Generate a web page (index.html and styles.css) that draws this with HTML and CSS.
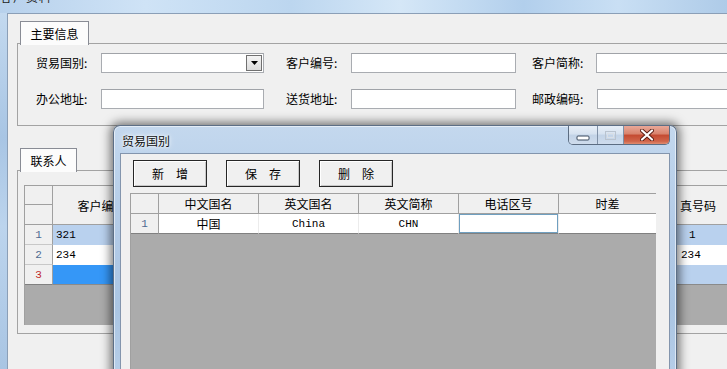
FILE: index.html
```html
<!DOCTYPE html>
<html lang="zh-CN">
<head>
<meta charset="utf-8">
<title>客户资料</title>
<link rel="stylesheet" href="styles.css">
</head>
<body>
<div class="screen">
  <div class="bg-title"><span>客户资料</span></div>
  <div class="bg-main">
    <div class="bg-frame"></div>
    <div class="bg-client">
      <div class="tabs"><div class="tab tab-main">主要信息</div></div>
      <div class="panel panel-info">
        <div class="form-row">
          <span class="lbl lbl-a">贸易国别:</span>
          <div class="input in-a combo"><span class="drop"><svg width="7" height="4" viewBox="0 0 7 4"><path d="M0 0h7L3.5 4z" fill="#000"/></svg></span></div>
          <span class="lbl lbl-b">客户编号:</span>
          <div class="input in-b"></div>
          <span class="lbl lbl-c">客户简称:</span>
          <div class="input in-c"></div>
        </div>
        <div class="form-row">
          <span class="lbl lbl-a">办公地址:</span>
          <div class="input in-a"></div>
          <span class="lbl lbl-b">送货地址:</span>
          <div class="input in-b"></div>
          <span class="lbl lbl-c lbl-c2">邮政编码:</span>
          <div class="input in-c"></div>
        </div>
      </div>
      <div class="tabs tabs-2"><div class="tab tab-contact">联系人</div></div>
      <div class="panel panel-contact">
        <div class="cgrid">
          <div class="crow chead">
            <div class="rh rh-split"><div class="rh-top"></div><div class="rh-bot"></div></div>
            <div class="cc c1">客户编号</div>
            <div class="cc c2"></div>
            <div class="cc c3"></div>
            <div class="cc c4"></div>
            <div class="cc c5"></div>
            <div class="cc c6"></div>
            <div class="cc c7 fax-h">真号码</div>
          </div>
          <div class="crow cdata alt">
            <div class="rh num">1</div>
            <div class="cc c1 txt">321</div>
            <div class="cc c2"></div><div class="cc c3"></div><div class="cc c4"></div><div class="cc c5"></div><div class="cc c6"></div>
            <div class="cc c7 txt fax1">1</div>
          </div>
          <div class="crow cdata">
            <div class="rh num">2</div>
            <div class="cc c1 txt">234</div>
            <div class="cc c2"></div><div class="cc c3"></div><div class="cc c4"></div><div class="cc c5"></div><div class="cc c6"></div>
            <div class="cc c7 txt fax2">234</div>
          </div>
          <div class="crow cdata alt last">
            <div class="rh num new">3</div>
            <div class="cc c1 sel"></div>
            <div class="cc c2"></div><div class="cc c3"></div><div class="cc c4"></div><div class="cc c5"></div><div class="cc c6"></div>
            <div class="cc c7"></div>
          </div>
          <div class="cgray"></div>
        </div>
      </div>
    </div>
  </div>

  <div class="dialog">
    <div class="dlg-title">
      <span class="dlg-caption">贸易国别</span>
      <div class="winbtns">
        <div class="wb wb-min"><svg width="14" height="6" viewBox="0 0 14 6"><rect x="1" y="1" width="12" height="4" rx="1" fill="#fff" stroke="#3b4a5e"/></svg></div>
        <div class="wb wb-max"><svg width="13" height="11" viewBox="0 0 13 11"><rect x="1.5" y="1.5" width="10" height="8" fill="none" stroke="#b9c3cf" stroke-width="1"/><rect x="3.5" y="3.5" width="6" height="4" fill="none" stroke="#d9dfe6"/></svg></div>
        <div class="wb wb-close"><svg width="14" height="12" viewBox="0 0 14 12"><path d="M2 1.5L12 10.5M12 1.5L2 10.5" stroke="#5a1c12" stroke-width="4" stroke-linecap="round"/><path d="M2 1.5L12 10.5M12 1.5L2 10.5" stroke="#fff" stroke-width="2.2" stroke-linecap="round"/></svg></div>
      </div>
    </div>
    <div class="dlg-client">
      <div class="btnrow">
        <div class="btn">新　增</div>
        <div class="btn">保　存</div>
        <div class="btn">删　除</div>
      </div>
      <div class="dgrid">
        <div class="drow dhead">
          <div class="drh"></div>
          <div class="dc">中文国名</div>
          <div class="dc">英文国名</div>
          <div class="dc">英文简称</div>
          <div class="dc">电话区号</div>
          <div class="dc dc-last">时差</div>
        </div>
        <div class="drow ddata">
          <div class="drh num">1</div>
          <div class="dc">中国</div>
          <div class="dc mono">China</div>
          <div class="dc mono">CHN</div>
          <div class="dc focus"></div>
          <div class="dc dc-last"></div>
        </div>
        <div class="dgray"></div>
      </div>
    </div>
  </div>
</div>
</body>
</html>
```
FILE: styles.css
```css
* { box-sizing: border-box; margin: 0; padding: 0; }
html, body { width: 727px; height: 369px; overflow: hidden; }
body {
  font-family: "Noto Sans CJK SC", "Noto Sans", sans-serif;
  font-size: 12px;
  color: #000;
  background: #f0f0f0;
}
.screen {
  position: relative;
  width: 727px;
  height: 369px;
  overflow: hidden;
  display: flex;
  flex-direction: column;
}

/* background window */
.bg-title {
  height: 13px;
  flex: none;
  overflow: hidden;
  background: linear-gradient(90deg, #b7d1ec 0%, #cfe3f6 20%, #bcd6ef 40%, #d5e7f7 55%, #b2cfec 72%, #c9dff4 85%, #aecbe8 100%);
}
.bg-title span {
  display: block;
  margin-top: -11px;
  line-height: 16px;
  color: #1c1c1c;
  letter-spacing: 1px;
}
.bg-main { flex: 1; display: flex; min-height: 0; }
.bg-frame {
  width: 7px;
  flex: none;
  background: linear-gradient(180deg, #c3d9ef 0%, #a8c5e4 35%, #bcd4ed 60%, #a9c5e3 100%);
}
.bg-client {
  flex: 1;
  min-width: 0;
  background: #f0f0f0;
  border-top: 1px solid #8b9fb7;
  border-left: 1px solid #8b9fb7;
  padding: 7px 0 0 9px;
  display: flex;
  flex-direction: column;
}

.tabs {
  display: flex;
  height: 23px;
  padding-left: 3px;
  position: relative;
  z-index: 1;
  margin-bottom: -1px;
  flex: none;
}
.tab {
  height: 24px;
  border: 1px solid #898c95;
  border-bottom: none;
  background: #fcfcfc;
  display: flex;
  align-items: center;
  justify-content: center;
  line-height: 1;
}
.tab-main { width: 69px; }
.tab-contact { width: 57px; }
.tabs-2 { margin-top: 22px; }

.panel {
  border: 1px solid #a3a3a3;
  border-right: none;
  margin-right: -4px;
  flex: none;
}
.panel-info {
  height: 83px;
  padding: 9px 0 0 18px;
  display: flex;
  flex-direction: column;
  gap: 16px;
}
.form-row { display: flex; align-items: center; height: 20px; }
.lbl { flex: none; line-height: 20px; white-space: nowrap; }
.lbl-a { width: 65px; }
.lbl-b { width: 65px; margin-left: 22px; }
.lbl-c { width: 64px; margin-left: 16px; }
.lbl-c2 { width: 65px; }
.input {
  height: 20px;
  background: #fff;
  border: 1px solid #a9acb1;
  border-top-color: #a0a3a8;
  flex: none;
  position: relative;
}
.in-a { width: 163px; }
.in-b { width: 165px; }
.in-c { flex: 1; }
.combo { display: flex; justify-content: flex-end; align-items: center; padding-right: 1px; }
.drop {
  width: 16px;
  height: 16px;
  border: 1px solid #707070;
  background: linear-gradient(180deg, #f4f4f4, #dcdcdc);
  display: flex;
  align-items: center;
  justify-content: center;
}

.panel-contact {
  height: 164px;
  padding: 14px 0 0 6px;
}
.cgrid {
  height: 140px;
  border-top: 1px solid #a0a0a0;
  border-left: 1px solid #a0a0a0;
  display: flex;
  flex-direction: column;
  width: 760px;
}
.crow { display: flex; flex: none; }
.chead { height: 39px; }
.cdata { height: 20px; }
.rh {
  width: 28px;
  flex: none;
  background: #f0f0f0;
  border-right: 1px solid #a0a0a0;
  border-bottom: 1px solid #c8c8c8;
}
.rh-split { display: flex; flex-direction: column; border-bottom: 1px solid #a0a0a0; }
.rh-top { height: 19px; border-bottom: 1px solid #a0a0a0; }
.rh-bot { flex: 1; }
.cc {
  flex: none;
  display: flex;
  align-items: center;
}
.chead .cc {
  justify-content: center;
  border-right: 1px solid #a0a0a0;
  border-bottom: 1px solid #a0a0a0;
  background: #f0f0f0;
}
.chead .cc.fax-h { justify-content: flex-start; padding-left: 38px; }
.c1 { width: 98px; }
.c2, .c3, .c4, .c5 { width: 100px; }
.c6 { width: 91px; }
.c7 { width: 100px; }
.cdata .cc { background: #fff; }
.cdata.alt .cc { background: #b9d1ee; }
.cdata .cc.sel { background: #3597f7; }
.cdata.last .rh { border-bottom: 1px solid #808080; }
.cdata.last .cc { border-bottom: 1px solid #8a8a8a; }
.num {
  display: flex;
  align-items: center;
  justify-content: center;
  font-family: "Liberation Mono", monospace;
  font-size: 11px;
  color: #4f6a90;
}
.num.new { color: #c0282a; }
.txt {
  font-family: "Liberation Mono", monospace;
  font-size: 11px;
  padding-left: 3px;
}
.fax1 { padding-left: 47px; }
.fax2 { padding-left: 39px; }
.cgray { flex: 1; background: #ababab; }

/* dialog window (overlay) */
.dialog {
  position: absolute;
  left: 113px;
  top: 125px;
  width: 564px;
  height: 260px;
  padding: 0 6px;
  border: 1px solid #5d6f86;
  border-bottom: none;
  border-radius: 7px 7px 0 0;
  background: linear-gradient(180deg, #c4d8ee 0%, #bed4ec 12%, #b3cbe7 40%, #aac5e3 70%, #b8cfe9 100%);
  box-shadow: 0 0 10px 3px rgba(0, 0, 0, 0.5), inset 0 0 0 1px rgba(255, 255, 255, 0.55);
  display: flex;
  flex-direction: column;
}
.dlg-title {
  height: 27px;
  flex: none;
  position: relative;
  display: flex;
  align-items: center;
  padding-left: 2px;
  padding-top: 2px;
}
.dlg-caption {
  color: #111;
  text-shadow: 0 0 6px #fff, 0 0 3px #fff;
}
.winbtns {
  position: absolute;
  top: 0;
  right: 0;
  height: 19px;
  display: flex;
  border: 1px solid #5c6d82;
  border-top: none;
  border-radius: 0 0 5px 5px;
  overflow: hidden;
}
.wb {
  height: 100%;
  display: flex;
  align-items: center;
  justify-content: center;
}
.wb-min, .wb-max {
  background: linear-gradient(180deg, #e7eef7 0%, #d6e2f0 45%, #c2d3e7 50%, #cfdcec 100%);
  border-right: 1px solid #7f90a6;
}
.wb-min { width: 29px; padding-top: 5px; }
.wb-max { width: 26px; }
.wb-close {
  width: 45px;
  background: linear-gradient(180deg, #e9a898 0%, #d8826c 45%, #c44a31 50%, #d0654a 85%, #e08c70 100%);
}
.dlg-client {
  flex: 1;
  background: #f0f0f0;
  border: 1px solid #8395ad;
  border-bottom: none;
  padding: 6px 0 0 9px;
  display: flex;
  flex-direction: column;
}
.btnrow { display: flex; gap: 19px; margin-left: 3px; flex: none; }
.btn {
  width: 74px;
  height: 27px;
  border: 1px solid #262626;
  background: #f0f0f0;
  box-shadow: inset 1px 1px 0 #fff, inset -1px -1px 0 #c8c8c8;
  display: flex;
  align-items: center;
  justify-content: center;
}
.dgrid {
  width: 526px;
  margin-top: 6px;
  flex: 1;
  display: flex;
  flex-direction: column;
  border-top: 1px solid #a0a0a0;
  border-left: 1px solid #a0a0a0;
}
.drow { display: flex; flex: none; height: 20px; }
.drh {
  width: 28px;
  flex: none;
  background: #f0f0f0;
  border-right: 1px solid #a0a0a0;
  border-bottom: 1px solid #a0a0a0;
}
.ddata .drh { border-bottom-color: #808080; }
.dc {
  width: 100px;
  flex: none;
  display: flex;
  align-items: center;
  justify-content: center;
}
.dc-last { width: 97px; }
.dhead .dc {
  background: #f0f0f0;
  border-right: 1px solid #a0a0a0;
  border-bottom: 1px solid #a0a0a0;
}
.dhead .dc-last { border-right: none; }
.ddata .dc {
  background: #fff;
  border-right: 1px solid #ececec;
  border-bottom: 1px solid #808080;
}
.ddata .dc-last { border-right: none; }
.mono { font-family: "Liberation Mono", monospace; font-size: 11px; }
.ddata .dc.focus { box-shadow: inset 0 0 0 1px #6f9fc0; }
.dgray { flex: 1; background: #ababab; }
```
